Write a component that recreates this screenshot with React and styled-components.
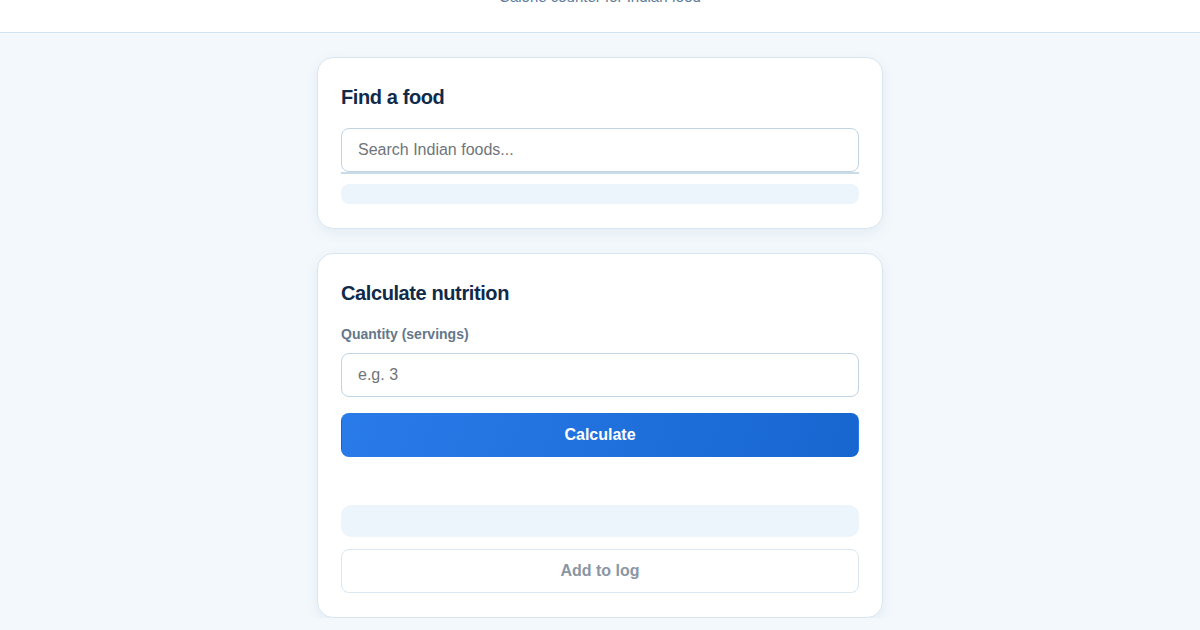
import React, { useState } from "react";
import styled, { createGlobalStyle } from "styled-components";

const GlobalStyle = createGlobalStyle`
  * {
    box-sizing: border-box;
  }
  body {
    margin: 0;
    background: #f3f8fc;
    font-family: "Liberation Sans", Arial, sans-serif;
    color: #0f2a4a;
  }
`;

const Header = styled.header`
  height: 33px;
  background: #ffffff;
  border-bottom: 1px solid #d3e3ef;
  overflow: hidden;
  display: flex;
  flex-direction: column;
  justify-content: flex-end;
  align-items: center;
  padding-bottom: 26px;
`;

const Subtitle = styled.p`
  margin: 0;
  font-size: 15px;
  line-height: 18px;
  color: #5b7a99;
`;

const Main = styled.main`
  width: 566px;
  margin: 24px auto 0;
  display: flex;
  flex-direction: column;
  gap: 24px;
`;

const Card = styled.section`
  background: #ffffff;
  border: 1px solid #d8e6f0;
  border-radius: 16px;
  padding: 24px 23px;
  box-shadow: 0 4px 14px rgba(30, 80, 130, 0.07);
  display: flex;
  flex-direction: column;
`;

const CardTitle = styled.h2`
  margin: 0 0 16px;
  font-size: 20px;
  line-height: 30px;
  font-weight: 700;
  letter-spacing: -0.4px;
  color: #0f2a4a;
`;

const Label = styled.label`
  font-size: 14px;
  line-height: 20px;
  font-weight: 700;
  color: #64778a;
  margin-bottom: 9px;
`;

const Input = styled.input`
  width: 100%;
  height: 44px;
  padding: 0 16px;
  border: 1px solid #c0d4e3;
  border-radius: 8px;
  background: #ffffff;
  font-family: inherit;
  font-size: 16px;
  color: #0f2a4a;
  outline: none;
  &::placeholder {
    color: #6f757b;
  }
`;

const Results = styled.div`
  height: 2px;
  background: #c9dbe6;
  box-shadow: 0 4px 8px rgba(30, 80, 130, 0.04);
`;

const Placeholder = styled.div`
  height: ${(p) => p.$h}px;
  margin-top: ${(p) => p.$top}px;
  background: #edf5fc;
  border-radius: ${(p) => p.$radius}px;
`;

const Button = styled.button`
  height: 44px;
  width: 100%;
  border-radius: 8px;
  font-family: inherit;
  font-size: 16px;
  font-weight: 700;
  cursor: pointer;
  margin-top: ${(p) => p.$top || 0}px;
  border: 1px solid ${(p) => (p.$primary ? "transparent" : "#dbe6f0")};
  background: ${(p) =>
    p.$primary ? "linear-gradient(110deg, #2a7bea, #1766d0)" : "#ffffff"};
  color: ${(p) => (p.$primary ? "#ffffff" : "#8a96a3")};
`;

export default function App() {
  const [query, setQuery] = useState("");
  const [qty, setQty] = useState("");

  return (
    <>
      <GlobalStyle />
      <Header>
        <Subtitle>Calorie counter for Indian food</Subtitle>
      </Header>
      <Main>
        <Card>
          <CardTitle>Find a food</CardTitle>
          <Input
            placeholder="Search Indian foods..."
            value={query}
            onChange={(e) => setQuery(e.target.value)}
          />
          <Results />
          <Placeholder $h={20} $top={10} $radius={8} />
        </Card>
        <Card>
          <CardTitle>Calculate nutrition</CardTitle>
          <Label>Quantity (servings)</Label>
          <Input
            placeholder="e.g. 3"
            value={qty}
            onChange={(e) => setQty(e.target.value)}
          />
          <Button $primary $top={16}>
            Calculate
          </Button>
          <Placeholder $h={32} $top={48} $radius={10} />
          <Button $top={12}>Add to log</Button>
        </Card>
      </Main>
    </>
  );
}
